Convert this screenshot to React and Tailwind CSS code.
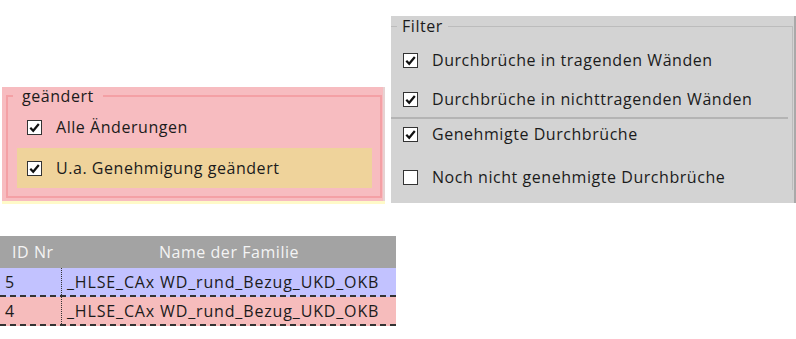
import { useState } from 'react'

function Box({ checked }) {
  return (
    <span className="flex h-[15px] w-[15px] shrink-0 items-center justify-center border border-[#333] bg-white">
      {checked && (
        <svg width="13" height="13" viewBox="0 0 13 13">
          <path d="M2.3 6.8 L5.2 9.8 L10.8 3" fill="none" stroke="#111" strokeWidth="2.2" />
        </svg>
      )}
    </span>
  )
}

function Check({ label, checked, className = '' }) {
  return (
    <div className={`flex items-center gap-[14px] ${className}`}>
      <Box checked={checked} />
      <span>{label}</span>
    </div>
  )
}

const rows = [
  { id: '5', name: '_HLSE_CAx WD_rund_Bezug_UKD_OKB', bg: 'bg-[#c2c2ff]' },
  { id: '4', name: '_HLSE_CAx WD_rund_Bezug_UKD_OKB', bg: 'bg-[#f6bcbc]' },
]

export default function App() {
  const [filter] = useState([true, true, true, false])

  return (
    <div className="h-[339px] w-[796px] overflow-hidden bg-white text-[16px] tracking-[0.55px] text-[#1b1b1b]" style={{ fontFamily: '"Open Sans", "Noto Sans", sans-serif' }}>
      <div className="flex items-start">
        {/* geändert */}
        <div className="ml-[2px] mt-[87px] w-[383px]">
          <div className="border-r-2 border-[#e6d2d2] bg-[#f7bcc0] pb-[3px] pl-[4px] pr-[1px]">
            <fieldset className="border-2 border-[#f4a0a5] pb-[8px]">
              <legend className="ml-[5px] px-[9px] leading-[18px]">geändert</legend>
              <Check className="mt-[9px] h-[26px] pl-[19px]" label="Alle Änderungen" checked />
              <Check className="ml-[9px] mr-[8px] mt-[8px] h-[40px] bg-[#efd39b] pl-[10px]" label="U.a. Genehmigung geändert" checked />
            </fieldset>
          </div>
          <div className="h-[3px] bg-[#fffac8]" />
        </div>

        {/* Filter */}
        <div className="ml-[6px] mt-[16px] h-[187px] w-[405px] border-r-2 border-[#a9a9a9] bg-[#d3d3d3]">
          <fieldset className="mr-[1px] border-r border-t border-[#bcbcbc]">
            <legend className="ml-[6px] px-[5px] leading-[20px]">Filter</legend>
            <Check className="ml-[12px] mt-[11px] h-[26px]" label="Durchbrüche in tragenden Wänden" checked={filter[0]} />
            <Check className="ml-[12px] mt-[13px] h-[26px]" label="Durchbrüche in nichttragenden Wänden" checked={filter[1]} />
            <div className="mr-[4px] mt-[5px] h-[2px] bg-[#b4b4b4]" />
            <Check className="ml-[12px] mt-[2px] h-[26px]" label="Genehmigte Durchbrüche" checked={filter[2]} />
            <Check className="ml-[12px] mt-[17px] h-[26px]" label="Noch nicht genehmigte Durchbrüche" checked={filter[3]} />
          </fieldset>
        </div>
      </div>

      {/* Tabelle */}
      <div className="mt-[32px] w-[396px]">
        <div className="flex h-[32px] items-center bg-[#a3a3a3] text-[#f4f4f4]">
          <div className="w-[62px] pl-[12px]">ID Nr</div>
          <div className="flex-1 text-center">Name der Familie</div>
        </div>
        {rows.map((r, i) => (
          <div key={i} className={`flex h-[29px] items-center border-b-2 border-dashed border-[#333] ${r.bg}`}>
            <div className="flex h-full w-[62px] items-center border-r border-dotted border-[#333] pl-[5px]">{r.id}</div>
            <div className="pl-[5px] tracking-[0.85px]">{r.name}</div>
          </div>
        ))}
      </div>
    </div>
  )
}
